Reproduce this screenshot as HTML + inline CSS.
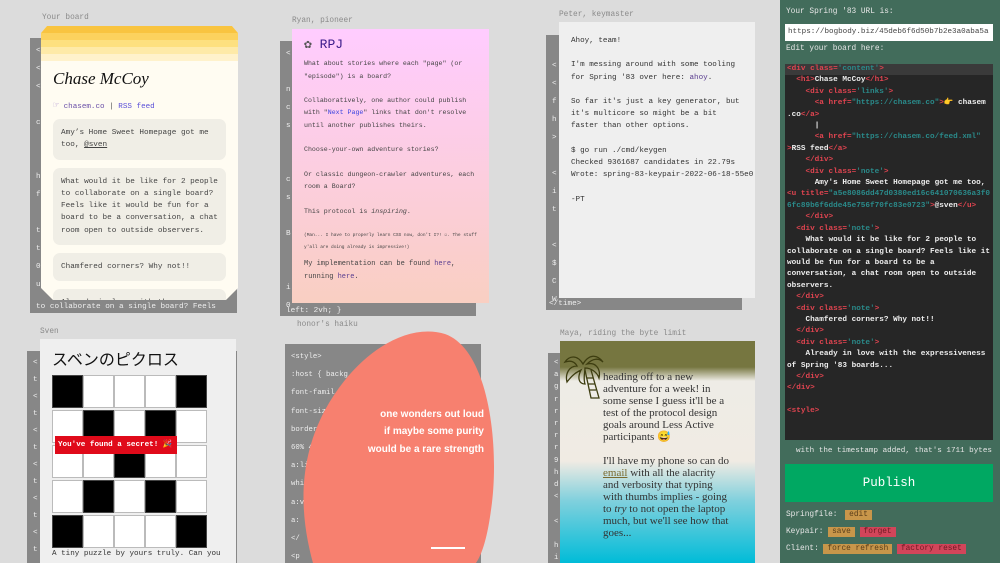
<!DOCTYPE html>
<html style="overflow:hidden;height:563px"><head><meta charset="utf-8"><style>
*{margin:0;padding:0;box-sizing:border-box}
body{width:1000px;height:563px;overflow:hidden;background:#dcdcdc;font-family:"Liberation Mono","DejaVu Sans Mono",monospace;position:relative}
.abs{position:absolute}
.lbl{position:absolute;font-size:7.8px;color:#8a8a8a}
.gray{position:absolute;background:#878787;color:#eee;font-size:7.6px;line-height:18px;padding:4px 6px;overflow:hidden;white-space:pre}
.note{background:#f0eee6;border-radius:7px;padding:8px 8px;font-size:7.7px;line-height:12.3px;color:#444;margin-bottom:8px}
a{color:#5a4fd8}
#side{position:absolute;left:780px;top:0;width:220px;height:563px;background:#426c5b;color:#e6e6e6;font-size:7.8px}
.ed{position:absolute;left:785px;top:64px;width:208px;height:376px;background:#262626;font-size:7.7px;line-height:11.4px;color:#eee;padding:0 2px;overflow:hidden;white-space:pre-wrap;word-break:break-all;font-weight:bold}
.t{color:#e04450}.s{color:#2a8a8a}
.tag{display:inline-block;padding:1px 4px;font-size:7.8px;color:#5a3e1a}
.o{background:#c8964a}.r{background:#d2455a;color:#6e1a22}
.cell{position:absolute;width:31px;height:33px;border:1px solid #bbb;background:#fff}
.cell.b{background:#000;border-color:#444}
</style></head><body>

<!-- board 1 -->
<div class="lbl" style="left:42px;top:14px">Your board</div>
<div class="gray" style="left:30px;top:38px;width:207px;height:275px">&lt;
&lt;
&lt;

c


h
f

t
t
0
u</div>
<div class="abs" style="left:36px;top:303px;font-size:7.7px;color:#eee;white-space:nowrap">to collaborate on a single board? Feels</div>
<div class="abs" style="left:41px;top:26px;width:197px;height:274px;background:#fffcf2;clip-path:polygon(6px 0,191px 0,197px 7px,197px 262px,185px 274px,12px 274px,0 262px,0 7px);overflow:hidden">
 <div style="height:7px;background:#f9c440"></div><div style="height:7px;background:#fcd25e"></div><div style="height:7px;background:#fde07f"></div><div style="height:7px;background:#feeaa8"></div><div style="height:7px;background:#fff2cc"></div>
 <div style="padding:8px 12px 0 12px">
  <div style="font-family:'Liberation Serif',serif;font-style:italic;font-size:17px;color:#111">Chase McCoy</div>
  <div style="font-size:7.6px;margin:11px 0 7px;color:#555"><span style="color:#a98ed0;font-size:10px">☞</span> <a style="color:#6a4fa8;text-decoration:none">chasem.co</a> | <a style="color:#5a4fd8;text-decoration:none">RSS feed</a></div>
  <div class="note">Amy’s Home Sweet Homepage got me too, <u>@sven</u></div>
  <div class="note">What would it be like for 2 people to collaborate on a single board? Feels like it would be fun for a board to be a conversation, a chat room open to outside observers.</div>
  <div class="note">Chamfered corners? Why not!!</div>
  <div class="note" style="height:40px">Already in love with the</div>
 </div>
</div>

<!-- board 2 -->
<div class="lbl" style="left:292px;top:17px">Ryan, pioneer</div>
<div class="gray" style="left:280px;top:41px;width:196px;height:275px">&lt;

n
c
s


c
s

B


i
0

g
1</div>
<div class="abs" style="left:286px;top:307px;font-size:7.7px;color:#eee">left: 2vh; }</div>
<div class="abs" style="left:292px;top:29px;width:197px;height:274px;background:linear-gradient(#ffccff,#f9cfc2);padding:8px 12px;color:#444;font-size:6.6px;line-height:12.3px">
 <div style="font-size:13px;margin:2px 0 7px 0"><span style="font-size:13px;color:#555">✿</span> <a style="color:#3a1a8a">RPJ</a></div>
 <div>What about stories where each "page" (or "episode") is a board?</div><br>
 <div>Collaboratively, one author could publish with "<a style="color:#3a44e0">Next Page</a>" links that don't resolve until another publishes theirs.</div><br>
 <div>Choose-your-own adventure stories?</div><br>
 <div>Or classic dungeon-crawler adventures, each room a Board?</div><br>
 <div>This protocol is <i>inspiring</i>.</div><br>
 <div style="font-size:4.5px;line-height:12px">(Man... I have to properly learn CSS now, don't I?! ☺. The stuff y'all are doing already is impressive!)</div>
 <div style="margin-top:4px;font-size:7px">My implementation can be found <a style="color:#5a3e90">here</a>, running <a style="color:#5a3e90">here</a>.</div>
</div>

<!-- board 3 -->
<div class="lbl" style="left:559px;top:11px">Peter, keymaster</div>
<div class="gray" style="left:546px;top:35px;width:196px;height:275px">
&lt;
&lt;
f
h
&gt;

&lt;
i
t

&lt;
$
C
W
5
&lt;

&lt;

&lt;</div>
<div class="abs" style="left:549px;top:300px;font-size:7.7px;color:#eee">&lt;/time&gt;</div>
<div class="abs" style="left:559px;top:22px;width:196px;height:276px;background:#efefef;padding:13px 12px;font-size:7.6px;line-height:12.2px;color:#333;white-space:nowrap;overflow:hidden">
Ahoy, team!<br><br>I'm messing around with some tooling<br>for Spring '83 over here: <a style="color:#5a3e90">ahoy</a>.<br><br>So far it's just a key generator, but<br>it's multicore so might be a bit<br>faster than other options.<br><br>$ go run ./cmd/keygen<br>Checked 9361687 candidates in 22.79s<br>Wrote: spring-83-keypair-2022-06-18-55e0<br><br>-PT</div>

<!-- Sven -->
<div class="lbl" style="left:40px;top:328px">Sven</div>
<div class="gray" style="left:27px;top:351px;width:210px;height:212px;font-size:7.6px;line-height:17px">&lt;
t
&lt;
t
&lt;
t
&lt;
t
&lt;
t
&lt;
t</div>
<div class="abs" style="left:40px;top:339px;width:196px;height:224px;background:#efefef">
 <div style="position:absolute;left:12px;top:7px;font-family:'Noto Sans CJK JP',sans-serif;font-size:16px;color:#111">スベンのピクロス</div>
 <div style="position:absolute;left:12px;top:211px;font-size:7.6px;color:#333;white-space:nowrap">A tiny puzzle by yours truly. Can you</div>
</div>

<!-- haiku -->
<div class="lbl" style="left:297px;top:321px">honor's haiku</div>
<div class="gray" style="left:285px;top:344px;width:196px;height:219px;font-size:7.3px;line-height:18.2px">&lt;style&gt;
:host { backg
font-famil
font-siz
border
60% 4
a:li
whi
a:v
a:
&lt;/
&lt;p
ai
wo
pur
&lt;div
8px; </div>
<svg class="abs" style="left:285px;top:330px" width="215" height="240"><path d="M160 4 C205 20 215 120 206 180 C200 225 190 240 180 240 L30 240 C18 200 8 140 40 80 C70 25 120 -8 160 4 Z" fill="#f7806f"/></svg>
<div class="abs" style="left:330px;top:406px;width:154px;text-align:right;color:#fff;font-family:'Liberation Sans',sans-serif;font-weight:bold;font-size:10px;line-height:17.3px">one wonders out loud<br>if maybe some purity<br>would be a rare strength</div>
<div class="abs" style="left:431px;top:547px;width:34px;height:2px;background:#fff"></div>

<!-- Maya -->
<div class="lbl" style="left:560px;top:330px">Maya, riding the byte limit</div>
<div class="gray" style="left:548px;top:353px;width:200px;height:210px;font-size:7.3px;line-height:12.2px">&lt;
a
g
r
r
r
r
r
9
h
d
&lt;

&lt;

h
i</div>
<div class="abs" style="left:560px;top:341px;width:195px;height:222px;overflow:hidden;background:linear-gradient(#767640 0,#767640 26px,#eeece6 40px,#f0ebe3 120px,#7fd0dd 160px,#00bcd8 222px)">
<svg class="abs" style="left:3px;top:11px" width="42" height="48" viewBox="0 0 42 48" fill="none" stroke="#3d3d10" stroke-width="1.3"><path d="M20 12 C14 2 6 4 2 10 C8 8 12 10 14 14 C6 14 2 22 4 30 C10 22 14 20 18 18 C14 26 16 32 22 32 C20 26 22 20 22 16 C28 16 34 20 36 26 C38 16 32 10 24 12 C30 6 36 6 40 10 C34 2 26 2 20 12 Z"/><path d="M22 18 L28 46 L36 46 L28 18 M24 26 L30 26 M25 32 L32 32 M26 38 L33 38"/></svg>
<div class="abs" style="left:43px;top:30px;width:126px;font-family:'Liberation Serif',serif;font-size:11px;line-height:12px;color:#333">heading off to a new adventure for a week! in some sense I guess it'll be a test of the protocol design goals around Less Active participants 😅<br><br>I'll have my phone so can do <u style="color:#7a6a30">email</u> with all the alacrity and verbosity that typing with thumbs implies - going to <i>try</i> to not open the laptop much, but we'll see how that goes...</div>
</div>

<!-- sidebar -->
<div id="side">
 <div class="abs" style="left:6px;top:8px">Your Spring '83 URL is:</div>
 <div class="abs" style="left:5px;top:24px;width:208px;height:17px;background:#fff;color:#444;font-size:7.6px;line-height:17px;padding-left:3px;white-space:nowrap;overflow:hidden">https://bogbody.biz/45deb6f6d50b7b2e3a0aba5a</div>
 <div class="abs" style="left:6px;top:45px">Edit your board here:</div>
 <div class="abs" style="left:16px;top:447px;font-size:7.6px;white-space:nowrap">with the timestamp added, that's 1711 bytes</div>
 <div class="abs" style="left:5px;top:464px;width:208px;height:38px;background:#00a862;color:#fff;font-size:12.5px;line-height:38px;text-align:center">Publish</div>
 <div class="abs" style="left:6px;top:510px">Springfile: <span class="tag o" style="margin-left:3px">edit</span></div>
 <div class="abs" style="left:6px;top:527px">Keypair: <span class="tag o">save</span> <span class="tag r">forget</span></div>
 <div class="abs" style="left:6px;top:544px">Client: <span class="tag o">force refresh</span> <span class="tag r">factory reset</span></div>
</div>
<div class="ed"><div style="background:#3a3a3a;margin:0 -2px;padding:0 2px"><span class="t">&lt;div class=</span><span class="s">'content'</span><span class="t">&gt;</span></div>  <span class="t">&lt;h1&gt;</span>Chase McCoy<span class="t">&lt;/h1&gt;</span>
    <span class="t">&lt;div class=</span><span class="s">'links'</span><span class="t">&gt;</span>
      <span class="t">&lt;a href=</span><span class="s">"https://chasem.co"</span><span class="t">&gt;</span>👉 chasem
.co<span class="t">&lt;/a&gt;</span>
      |
      <span class="t">&lt;a href=</span><span class="s">"https://chasem.co/feed.xml"</span>
<span class="t">&gt;</span>RSS feed<span class="t">&lt;/a&gt;</span>
    <span class="t">&lt;/div&gt;</span>
    <span class="t">&lt;div class=</span><span class="s">'note'</span><span class="t">&gt;</span>
      Amy's Home Sweet Homepage got me too,
<span class="t">&lt;u title=</span><span class="s">"a5e8086dd47d0380ed16c641070636a3f06fc89b6f6dde45e756f70fc83e0723"</span><span class="t">&gt;</span>@sven<span class="t">&lt;/u&gt;</span>
    <span class="t">&lt;/div&gt;</span>
  <span class="t">&lt;div class=</span><span class="s">'note'</span><span class="t">&gt;</span>
    What would it be like for 2 people to
collaborate on a single board? Feels like it
would be fun for a board to be a
conversation, a chat room open to outside
observers.
  <span class="t">&lt;/div&gt;</span>
  <span class="t">&lt;div class=</span><span class="s">'note'</span><span class="t">&gt;</span>
    Chamfered corners? Why not!!
  <span class="t">&lt;/div&gt;</span>
  <span class="t">&lt;div class=</span><span class="s">'note'</span><span class="t">&gt;</span>
    Already in love with the expressiveness
of Spring '83 boards...
  <span class="t">&lt;/div&gt;</span>
<span class="t">&lt;/div&gt;</span>

<span class="t">&lt;style&gt;</span></div>

<!-- picross grid -->
<div class="cell b" style="left:52px;top:375px"></div><div class="cell" style="left:83px;top:375px"></div><div class="cell" style="left:114px;top:375px"></div><div class="cell" style="left:145px;top:375px"></div><div class="cell b" style="left:176px;top:375px"></div>
<div class="cell" style="left:52px;top:410px"></div><div class="cell b" style="left:83px;top:410px"></div><div class="cell" style="left:114px;top:410px"></div><div class="cell b" style="left:145px;top:410px"></div><div class="cell" style="left:176px;top:410px"></div>
<div class="cell" style="left:52px;top:445px"></div><div class="cell" style="left:83px;top:445px"></div><div class="cell b" style="left:114px;top:445px"></div><div class="cell" style="left:145px;top:445px"></div><div class="cell" style="left:176px;top:445px"></div>
<div class="cell" style="left:52px;top:480px"></div><div class="cell b" style="left:83px;top:480px"></div><div class="cell" style="left:114px;top:480px"></div><div class="cell b" style="left:145px;top:480px"></div><div class="cell" style="left:176px;top:480px"></div>
<div class="cell b" style="left:52px;top:515px"></div><div class="cell" style="left:83px;top:515px"></div><div class="cell" style="left:114px;top:515px"></div><div class="cell" style="left:145px;top:515px"></div><div class="cell b" style="left:176px;top:515px"></div>
<div class="abs" style="left:55px;top:436px;width:122px;height:18px;background:#e00a1a;color:#fff;font-size:7.6px;font-weight:bold;line-height:18px;padding-left:3px;white-space:nowrap;overflow:hidden">You've found a secret! 🎉</div>
</body></html>
